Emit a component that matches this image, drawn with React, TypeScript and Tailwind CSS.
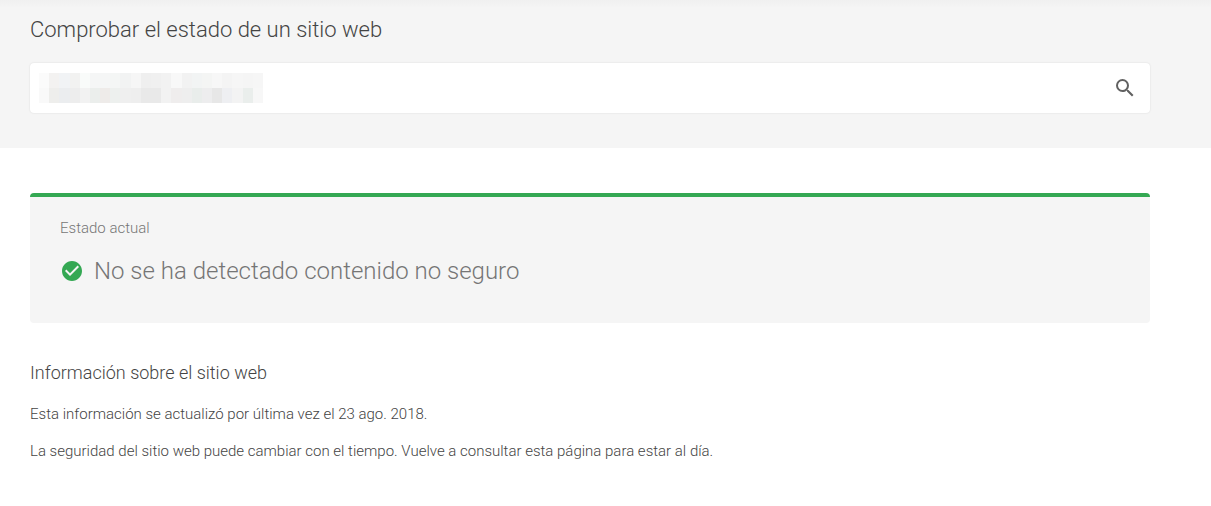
import { MdCheckCircle, MdSearch } from 'react-icons/md';

// Two rows of blocks that hide the address in the search box
const maskedBlocks = [
  '#fbfbfb', '#f3f2f1', '#f1f3f5', '#f2f2f1', '#f9fbfa', '#f5f6f6', '#f5f6f6', '#f4f6f5', '#f2f3f3', '#f6f6f6', '#efefef',
  '#f0f0f0', '#f2f2f2', '#f8f8f8', '#f2f2f2', '#f2f4f4', '#f4f5f4', '#f7f7f7', '#f4f4f4', '#f6f6f6', '#f5f5f5', '#f6f6f6',
  '#f9f9f9', '#eeeeec', '#ebedef', '#ededed', '#f2f2f2', '#ebeeec', '#eeebe9', '#edf0ee', '#efefef', '#eeeeee', '#e9e9e9',
  '#e9e9e9', '#f2f2f2', '#efeded', '#eeeeee', '#e9edeb', '#ededee', '#e7e7e7', '#eeeff2', '#f3f3f3', '#eaeeec', '#f7f7f7',
];

export default function App() {
  return (
    <div className="min-h-screen bg-white font-['Roboto',sans-serif] font-light text-[#444444]">
      {/* Search */}
      <header className="bg-[#f5f5f5] bg-[linear-gradient(#f0f0f0,#f5f5f5_8px)] pt-3.5 pr-[61px] pb-[35px] pl-[30px]">
        <h1 className="text-[22px] leading-8">
          <label htmlFor="site-url">Comprobar el estado de un sitio web</label>
        </h1>
        <form
          className="mt-[17px] flex h-[50px] items-center rounded bg-white pr-[13px] pl-[9px] shadow-[0_0_2px_rgba(0,0,0,0.12)]"
          onSubmit={(e) => e.preventDefault()}
        >
          <div className="grid h-[30px] w-56 grid-cols-22 grid-rows-2" aria-hidden="true">
            {maskedBlocks.map((color, i) => (
              <span key={i} style={{ backgroundColor: color }} />
            ))}
          </div>
          <input id="site-url" type="text" className="h-full min-w-0 flex-1 bg-transparent text-[15px] outline-none" />
          <button type="submit" aria-label="Buscar" className="text-[#616161]">
            <MdSearch size={24} />
          </button>
        </form>
      </header>

      <main className="pt-[45px] pr-[61px] pb-10 pl-[30px]">
        {/* Current status */}
        <section className="rounded border-t-4 border-[#34a853] bg-[#f5f5f5] px-[30px] pt-[19px] pb-9 text-[#757575]">
          <h2 className="text-[15px] leading-6">Estado actual</h2>
          <div className="mt-[15px] flex items-center gap-2.5">
            <MdCheckCircle size={24} className="shrink-0 text-[#34a853]" />
            <p className="text-2xl leading-8">No se ha detectado contenido no seguro</p>
          </div>
        </section>

        {/* Site info */}
        <section className="mt-[38px] text-[15px] leading-6 text-[#444444]">
          <h2 className="text-lg leading-6">Información sobre el sitio web</h2>
          <p className="mt-[17px]">Esta información se actualizó por última vez el 23 ago. 2018.</p>
          <p className="mt-[13px]">
            La seguridad del sitio web puede cambiar con el tiempo. Vuelve a consultar esta página para estar al día.
          </p>
        </section>
      </main>
    </div>
  );
}
